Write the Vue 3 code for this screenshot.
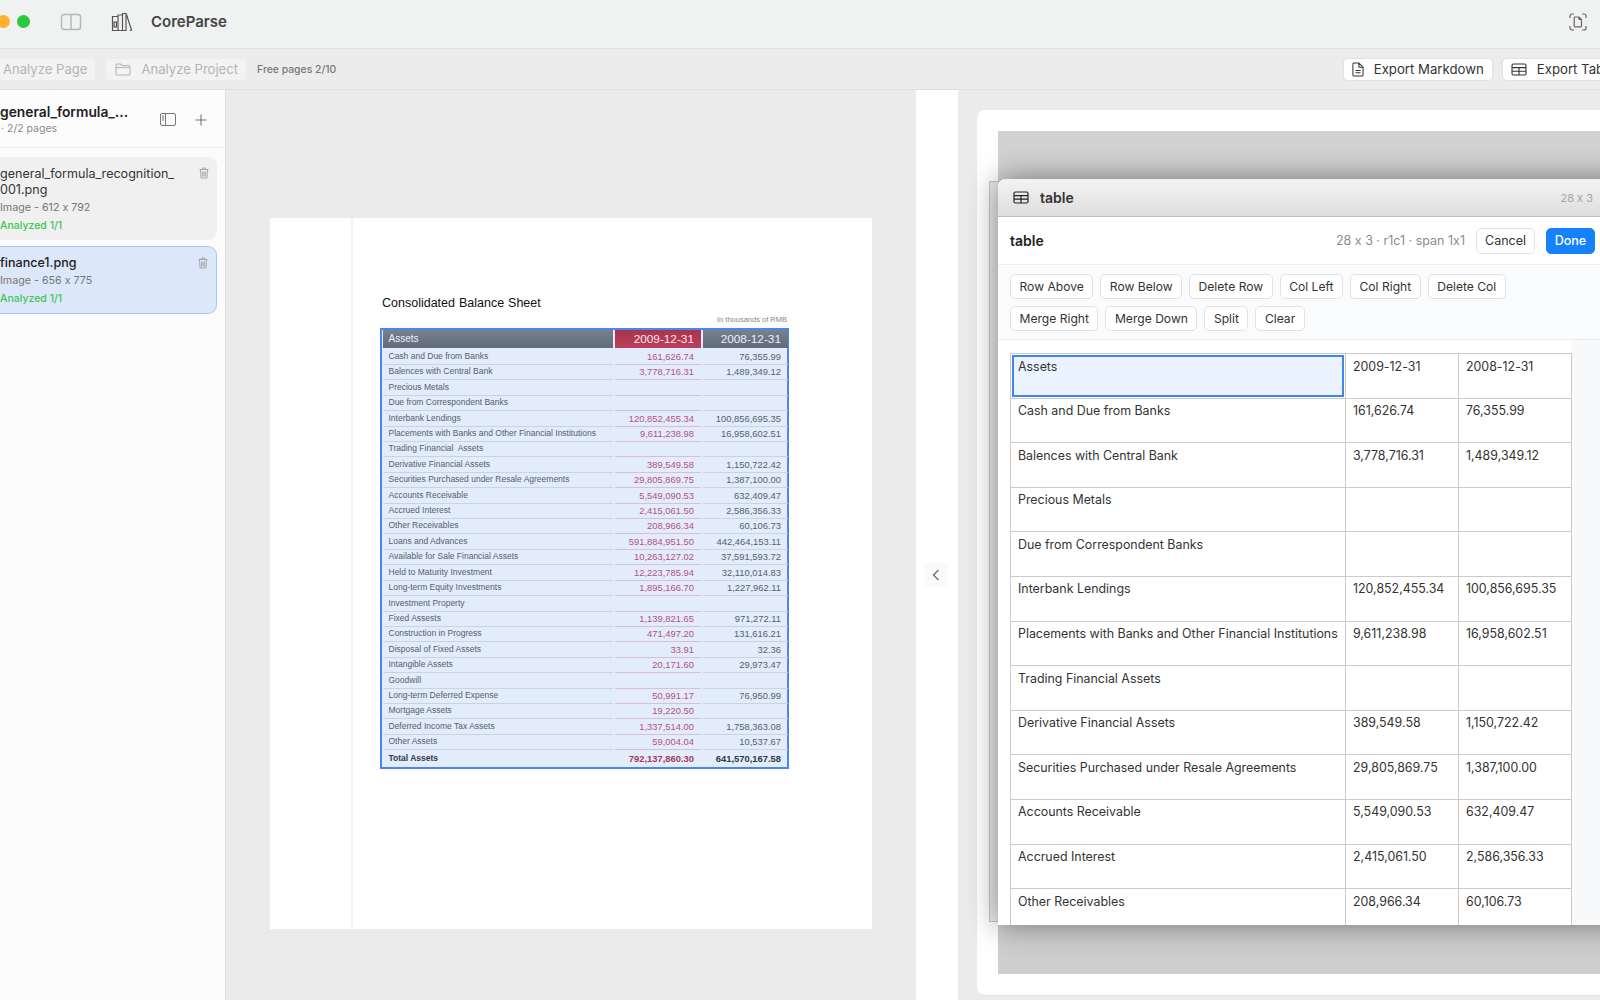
<script setup>
const docRows = [
  ['Cash and Due from Banks', '161,626.74', '76,355.99'],
  ['Balences with Central Bank', '3,778,716.31', '1,489,349.12'],
  ['Precious Metals', '', ''],
  ['Due from Correspondent Banks', '', ''],
  ['Interbank Lendings', '120,852,455.34', '100,856,695.35'],
  ['Placements with Banks and Other Financial Institutions', '9,611,238.98', '16,958,602.51'],
  ['Trading Financial  Assets', '', ''],
  ['Derivative Financial Assets', '389,549.58', '1,150,722.42'],
  ['Securities Purchased under Resale Agreements', '29,805,869.75', '1,387,100.00'],
  ['Accounts Receivable', '5,549,090.53', '632,409.47'],
  ['Accrued Interest', '2,415,061.50', '2,586,356.33'],
  ['Other Receivables', '208,966.34', '60,106.73'],
  ['Loans and Advances', '591,884,951.50', '442,464,153.11'],
  ['Available for Sale Financial Assets', '10,263,127.02', '37,591,593.72'],
  ['Held to Maturity Investment', '12,223,785.94', '32,110,014.83'],
  ['Long-term Equity Investments', '1,895,166.70', '1,227,962.11'],
  ['Investment Property', '', ''],
  ['Fixed Assests', '1,139,821.65', '971,272.11'],
  ['Construction in Progress', '471,497.20', '131,616.21'],
  ['Disposal of Fixed Assets', '33.91', '32.36'],
  ['Intangible Assets', '20,171.60', '29,973.47'],
  ['Goodwill', '', ''],
  ['Long-term Deferred Expense', '50,991.17', '76,950.99'],
  ['Mortgage Assets', '19,220.50', ''],
  ['Deferred Income Tax Assets', '1,337,514.00', '1,758,363.08'],
  ['Other Assets', '59,004.04', '10,537.67'],
]

const editRows = [
  ['Assets', '2009-12-31', '2008-12-31'],
  ...docRows.slice(0, 12).map((r) => [r[0].replace('  ', ' '), r[1], r[2]]),
]

const toolRows = [
  ['Row Above', 'Row Below', 'Delete Row', 'Col Left', 'Col Right', 'Delete Col'],
  ['Merge Right', 'Merge Down', 'Split', 'Clear'],
]
</script>

<template>
  <div class="app">
    <header class="titlebar">
      <span class="light yellow"></span>
      <span class="light green"></span>
      <svg class="side-toggle" width="22" height="18" viewBox="0 0 22 18" fill="none" stroke="#b4b6b8" stroke-width="1.4">
        <rect x="1.5" y="1.5" width="19" height="15" rx="2.5" />
        <path d="M11 1.5v15" />
      </svg>
      <svg class="logo" width="22" height="20" viewBox="0 0 22 20" fill="none" stroke="#555" stroke-width="1.2">
        <path d="M1.5 4.5h5.5v14h-5.5zM7 3h4.5v15.5h-4.5zM11.5 1.5h3.5v17h-3.5zM15.5 2.5l5 15.5-1.6.5" />
        <rect x="3" y="10" width="2.4" height="5" />
      </svg>
      <span class="app-name">CoreParse</span>
      <svg class="scan" width="18" height="18" viewBox="0 0 18 18" fill="none" stroke="#666" stroke-width="1.2">
        <path d="M1 5V3a2 2 0 0 1 2-2h2M13 1h2a2 2 0 0 1 2 2v2M17 13v2a2 2 0 0 1-2 2h-2M5 17H3a2 2 0 0 1-2-2v-2" />
        <path d="M6 4h4l2.5 2.5V13a.8.8 0 0 1-.8.8H6a.8.8 0 0 1-.8-.8V4.800A.8.8 0 0 1 6 4zM10 4v2.500h2.500" />
      </svg>
    </header>

    <div class="toolbar">
      <button class="tool-btn off first">Analyze Page</button>
      <button class="tool-btn off">
        <svg width="16" height="13" viewBox="0 0 16 13" fill="none" stroke="#b5b5b5" stroke-width="1.1">
          <path d="M1 11V2a1 1 0 0 1 1-1h3.500l1.500 1.500h7a1 1 0 0 1 1 1V11a1 1 0 0 1-1 1H2a1 1 0 0 1-1-1zM1 4.500h14" />
        </svg>
        Analyze Project
      </button>
      <span class="free">Free pages 2/10</span>
      <button class="tool-btn export push">
        <svg width="12" height="15" viewBox="0 0 13 16" fill="none" stroke="#333" stroke-width="1.1">
          <path d="M2 1h5.500L12 5.500V14a1 1 0 0 1-1 1H2a1 1 0 0 1-1-1V2a1 1 0 0 1 1-1zM7.500 1v4.500H12M3.800 9h5.400M3.800 11.500h5.400" />
        </svg>
        Export Markdown
      </button>
      <button class="tool-btn export last">
        <svg width="16" height="13" viewBox="0 0 16 13" fill="none" stroke="#333" stroke-width="1.1">
          <rect x="1" y="1" width="14" height="11" rx="1.500" />
          <path d="M1 4.600h14M1 8.200h14M8 4.600V12" />
        </svg>
        Export Table
      </button>
    </div>

    <main class="main">
      <aside class="sidebar">
        <div class="side-head">
          <div class="side-title">
            <div class="project">general_formula_...</div>
            <div class="pages">· 2/2 pages</div>
          </div>
          <svg class="side-icon" width="16" height="13" viewBox="0 0 16 13" fill="none" stroke="#777" stroke-width="1">
            <rect x=".5" y=".5" width="15" height="12" rx="1.500" />
            <path d="M5.500.5v12M2 3h2M2 5h2M2 7h2" />
          </svg>
          <svg class="plus" width="12" height="12" viewBox="0 0 12 12" stroke="#777" stroke-width="1.100">
            <path d="M6 .5v11M.5 6h11" />
          </svg>
        </div>
        <div class="file">
          <div class="file-name">general_formula_recognition_<br />001.png</div>
          <div class="file-meta">Image - 612 x 792</div>
          <div class="file-status">Analyzed 1/1</div>
          <svg class="trash" width="10" height="12" viewBox="0 0 10 12" fill="none" stroke="#a8a8a8" stroke-width="1">
            <path d="M.5 2.500h9M3.500 2.500V1h3v1.500M1.500 2.500l.5 8.500h6l.5-8.500M3.700 4.500v5M5 4.500v5M6.300 4.500v5" />
          </svg>
        </div>
        <div class="file active">
          <div class="file-name strong">finance1.png</div>
          <div class="file-meta">Image - 656 x 775</div>
          <div class="file-status">Analyzed 1/1</div>
          <svg class="trash" width="10" height="12" viewBox="0 0 10 12" fill="none" stroke="#a0a4aa" stroke-width="1">
            <path d="M.5 2.500h9M3.500 2.500V1h3v1.500M1.500 2.500l.5 8.500h6l.5-8.500M3.700 4.500v5M5 4.500v5M6.300 4.500v5" />
          </svg>
        </div>
      </aside>

      <section class="viewer">
        <div class="page">
          <div class="page-margin"></div>
          <div class="page-body">
            <h1 class="doc-title">Consolidated Balance Sheet</h1>
            <div class="doc-unit">In thousands of RMB</div>
            <div class="doc-table">
              <div class="doc-row doc-head">
                <div class="c1">Assets</div>
                <div class="c2">2009-12-31</div>
                <div class="c3">2008-12-31</div>
              </div>
              <div v-for="row in docRows" :key="row[0]" class="doc-row">
                <div class="c1">{{ row[0] }}</div>
                <div class="c2">{{ row[1] }}</div>
                <div class="c3">{{ row[2] }}</div>
              </div>
              <div class="doc-row doc-total">
                <div class="c1">Total Assets</div>
                <div class="c2">792,137,860.30</div>
                <div class="c3">641,570,167.58</div>
              </div>
            </div>
          </div>
        </div>
      </section>

      <div class="gutter">
        <button class="collapse">
          <svg width="8" height="12" viewBox="0 0 8 12" fill="none" stroke="#777" stroke-width="1.500">
            <path d="M6.500 1 1.500 6l5 5" />
          </svg>
        </button>
      </div>

      <section class="result">
        <div class="result-panel">
          <div class="canvas">
            <div class="back-frame"></div>
            <div class="modal">
              <div class="modal-bar">
                <svg width="16" height="13" viewBox="0 0 16 13" fill="none" stroke="#222" stroke-width="1.200">
                  <rect x="1" y="1" width="14" height="11" rx="1.500" />
                  <path d="M1 4.600h14M1 8.200h14M8 4.600V12" />
                </svg>
                <span class="bar-title">table</span>
                <span class="bar-size">28 x 3</span>
              </div>
              <div class="edit-head">
                <span class="edit-title">table</span>
                <span class="edit-info">28 x 3 · r1c1 · span 1x1</span>
                <button class="btn cancel">Cancel</button>
                <button class="btn done">Done</button>
              </div>
              <div class="edit-tools">
                <div v-for="(tools, i) in toolRows" :key="i" class="tool-line">
                  <button v-for="t in tools" :key="t" class="btn small">{{ t }}</button>
                </div>
              </div>
              <div class="edit-body">
                <table class="edit-table">
                  <colgroup>
                    <col class="col-a" />
                    <col class="col-b" />
                    <col class="col-b" />
                  </colgroup>
                  <tbody>
                    <tr v-for="(row, r) in editRows" :key="r">
                      <td v-for="(cell, c) in row" :key="c" :class="{ selected: r === 0 && c === 0 }">{{ cell }}</td>
                    </tr>
                  </tbody>
                </table>
              </div>
            </div>
          </div>
        </div>
      </section>
    </main>
  </div>
</template>

<style scoped>
.app {
  width: 1600px;
  height: 1000px;
  overflow: hidden;
  display: flex;
  flex-direction: column;
  font-family: Inter, "Liberation Sans", sans-serif;
  font-feature-settings: "calt" 0;
  color: #222;
  background: #ebebeb;
}

button {
  font-feature-settings: "calt" 0;
}

.titlebar {
  height: 49px;
  box-sizing: border-box;
  padding-bottom: 5px;
  flex: none;
  display: flex;
  align-items: center;
  background: #f0f1f1;
  border-bottom: 1px solid #e0e0e0;
}

.light {
  width: 13px;
  height: 13px;
  border-radius: 50%;
  flex: none;
}

.yellow {
  background: #fdb22f;
  margin-left: -3px;
}

.green {
  background: #2ac940;
  margin-left: 7px;
}

.side-toggle {
  margin-left: 30px;
}

.logo {
  margin-left: 29px;
}

.app-name {
  margin-left: 18px;
  font-size: 15px;
  font-weight: 600;
  color: #444;
}

.scan {
  margin-left: auto;
  margin-right: 13px;
}

.toolbar {
  height: 41px;
  box-sizing: border-box;
  flex: none;
  display: flex;
  align-items: center;
  gap: 11px;
  background: #ececec;
  border-bottom: 1px solid #dedede;
}

.tool-btn {
  height: 21px;
  display: flex;
  align-items: center;
  gap: 10px;
  padding: 0 8px;
  border: none;
  border-radius: 4px;
  background: #f3f3f3;
  font-family: inherit;
  font-size: 13.1px;
  color: #b4b4b4;
  white-space: nowrap;
}

.tool-btn.first {
  margin-left: -5px;
}

.tool-btn.off svg {
  margin-left: 1px;
}

.free {
  font-size: 10.4px;
  font-weight: 500;
  color: #777;
}

.tool-btn.export {
  background: #fff;
  color: #333;
  box-shadow: 0 0 2px rgba(0, 0, 0, 0.15);
  padding: 0 8px;
  font-size: 13.2px;
}

.push {
  margin-left: auto;
}

.last {
  margin-right: -23px;
}

.main {
  flex: 1;
  min-height: 0;
  display: flex;
}

.sidebar {
  width: 226px;
  flex: none;
  background: #fbfbfb;
  border-right: 1px solid #dfdfdf;
  box-sizing: border-box;
}

.side-head {
  height: 58px;
  box-sizing: border-box;
  display: flex;
  align-items: flex-start;
  border-bottom: 1px solid #ececec;
  background: #fcfcfc;
}

.side-title {
  width: 160px;
  padding-top: 13px;
}

.project {
  font-size: 13.8px;
  font-weight: 600;
  line-height: 18px;
  color: #222;
}

.pages {
  margin-top: 1px;
  margin-left: 1px;
  font-size: 10.5px;
  line-height: 14px;
  color: #8a8a8a;
}

.side-icon {
  margin-top: 23px;
}

.plus {
  margin-top: 24px;
  margin-left: 19px;
}

.file {
  position: relative;
  width: 217px;
  box-sizing: border-box;
  margin-top: 9px;
  padding: 9px 0 0 0;
  height: 83px;
  background: #f0f0f0;
  border-radius: 0 9px 9px 0;
}

.file.active {
  margin-top: 6px;
  height: 68px;
  padding-top: 8px;
  background: #dce7fa;
  border: 1px solid #a8c6f5;
  border-left: none;
}

.file-name {
  font-size: 12.55px;
  line-height: 16px;
  color: #333;
}

.file-name.strong {
  font-weight: 500;
  color: #222;
}

.file-meta {
  margin-top: 3px;
  font-size: 10.7px;
  line-height: 14px;
  color: #777;
}

.file-status {
  margin-top: 3.5px;
  font-size: 10.5px;
  line-height: 14px;
  font-weight: 500;
  color: #3ec655;
}

.trash {
  position: absolute;
  top: 10px;
  right: 8px;
}

.viewer {
  width: 690px;
  flex: none;
  padding-top: 128px;
  box-sizing: border-box;
}

.page {
  width: 602px;
  height: 711px;
  margin: 0 auto;
  display: flex;
  background: #fff;
}

.page-margin {
  width: 81px;
  flex: none;
  border-right: 2px solid #f2f2f2;
}

.page-body {
  flex: 1;
  padding: 78px 0 0 27px;
  font-family: "Liberation Sans", Arial, sans-serif;
}

.doc-title {
  margin: 0;
  padding-left: 2px;
  font-size: 12.5px;
  line-height: 14px;
  font-weight: 400;
  color: #111;
  word-spacing: 0.5px;
}

.doc-unit {
  width: 408px;
  margin-top: 5px;
  text-align: right;
  padding-right: 1px;
  box-sizing: border-box;
  font-size: 7.5px;
  line-height: 9px;
  color: #888;
}

.doc-table {
  width: 409px;
  box-sizing: border-box;
  margin-top: 4px;
  padding: 0 1px;
  border: 2px solid #4a86f0;
  background: #e2ecfb;
}

.doc-row {
  display: grid;
  grid-template-columns: 230px 86px 85px;
  column-gap: 2px;
  height: 15.42px;
  font-size: 8.5px;
  line-height: 15px;
  color: #566070;
}

.doc-row > div {
  border-bottom: 1px solid #c8d4e4;
  white-space: pre;
  box-sizing: border-box;
}

.c1 {
  padding-left: 5.5px;
}

.c2,
.c3 {
  text-align: right;
  padding-right: 7px;
  font-size: 9.4px;
}

.c2 {
  color: #b7517c;
}

.doc-row > .c2 {
  border-bottom-color: #d9bfd3;
}

.doc-head {
  height: 17px;
  margin-bottom: 2px;
  line-height: 18px;
  color: #eef0f4;
}

.doc-head > div {
  border: none;
  background: linear-gradient(#77818f, #5f6a7b);
}

.doc-head .c1 {
  font-size: 10px;
}

.doc-head .c2,
.doc-head .c3 {
  font-size: 11.8px;
}

.doc-head > .c2 {
  color: #f6e8ec;
  background: linear-gradient(#a9344f, #bb3f5a);
}

.doc-total {
  height: 17px;
  line-height: 17px;
  font-weight: 700;
  color: #30394a;
}

.doc-total > div {
  border: none;
}

.doc-total .c2 {
  color: #a33a5c;
}

.gutter {
  width: 42px;
  flex: none;
  background: #fff;
  padding: 473px 0 0 8px;
  box-sizing: border-box;
}

.collapse {
  width: 24px;
  height: 24px;
  padding: 0;
  border: none;
  border-radius: 4px;
  background: #fafafa;
  display: flex;
  align-items: center;
  justify-content: center;
}

.result {
  flex: 1;
  min-width: 0;
  padding: 20px 0 0 19px;
  overflow: hidden;
}

.result-panel {
  width: 700px;
  height: 885px;
  box-sizing: border-box;
  padding: 21px 0 0 21px;
  background: #fff;
  border-radius: 8px 0 0 8px;
  box-shadow: 0 1px 1px rgba(0, 0, 0, 0.04);
}

.canvas {
  position: relative;
  width: 700px;
  height: 843px;
  box-sizing: border-box;
  padding-top: 48px;
  background: linear-gradient(#d2d2d2, #cecece);
}

.back-frame {
  position: absolute;
  left: -9px;
  top: 50px;
  bottom: 52px;
  width: 30px;
  box-sizing: border-box;
  background: #ebebeb;
  border: 1px solid #c6c6c6;
  border-right: none;
}

.modal {
  position: relative;
  height: 746px;
  overflow: hidden;
  background: #fff;
  border-radius: 8px 0 0 0;
  box-shadow: 0 0 30px rgba(0, 0, 0, 0.45);
}

.modal-bar {
  height: 38px;
  box-sizing: border-box;
  display: flex;
  align-items: center;
  padding: 0 105px 0 15px;
  background: linear-gradient(#f3f3f3, #dedede);
  border-bottom: 1px solid #bcbcbc;
}

.bar-title {
  margin-left: 11px;
  font-size: 14px;
  font-weight: 600;
  color: #333;
}

.bar-size {
  margin-left: auto;
  font-size: 11px;
  color: #a5a5a5;
}

.edit-head {
  height: 47px;
  width: 597px;
  box-sizing: border-box;
  display: flex;
  align-items: center;
  padding-left: 12px;
}

.edit-title {
  font-size: 14px;
  font-weight: 600;
  color: #222;
}

.edit-info {
  margin-left: auto;
  font-size: 12.5px;
  white-space: nowrap;
  color: #8c8c8c;
}

.btn {
  height: 25px;
  box-sizing: border-box;
  border: 1px solid #e2e2e2;
  border-radius: 5px;
  background: #fff;
  padding: 0 8.5px;
  font-family: inherit;
  font-size: 12.1px;
  color: #333;
  white-space: nowrap;
}

.edit-head .btn {
  width: 59px;
  height: 26px;
  padding: 0;
  font-size: 12.5px;
}

.edit-head .cancel {
  margin-left: 11px;
}

.edit-head .done {
  width: 49px;
  margin-left: 11px;
  background: #1581fb;
  border-color: #1581fb;
  color: #fff;
  font-weight: 500;
}

.edit-tools {
  height: 76px;
  box-sizing: border-box;
  padding: 9px 0 0 12px;
  display: flex;
  flex-direction: column;
  gap: 7px;
  background: #fafbfc;
  border-top: 1px solid #eeeeee;
  border-bottom: 1px solid #ededed;
}

.tool-line {
  display: flex;
  gap: 7px;
}

.edit-body {
  padding: 13px 0 0 12px;
  background: linear-gradient(90deg, #fff 573px, #f8f9fa 573px);
}

.edit-table {
  width: 561px;
  table-layout: fixed;
  border-collapse: collapse;
  background: #fff;
  font-size: 12.4px;
  line-height: 16px;
  color: #333;
}

.col-a {
  width: 335px;
}

.col-b {
  width: 113px;
}

.edit-table td {
  height: 44.6px;
  box-sizing: border-box;
  vertical-align: top;
  padding: 4.5px 7px;
  border: 1px solid #cbcbcb;
  white-space: nowrap;
}

.edit-table td.selected {
  background: #eaf3ff;
  box-shadow: inset 0 0 0 1px #fff, inset 0 0 0 3px #3f86ee;
}
</style>

<style>
html,
body {
  margin: 0;
  background: #ebebeb;
}
</style>
